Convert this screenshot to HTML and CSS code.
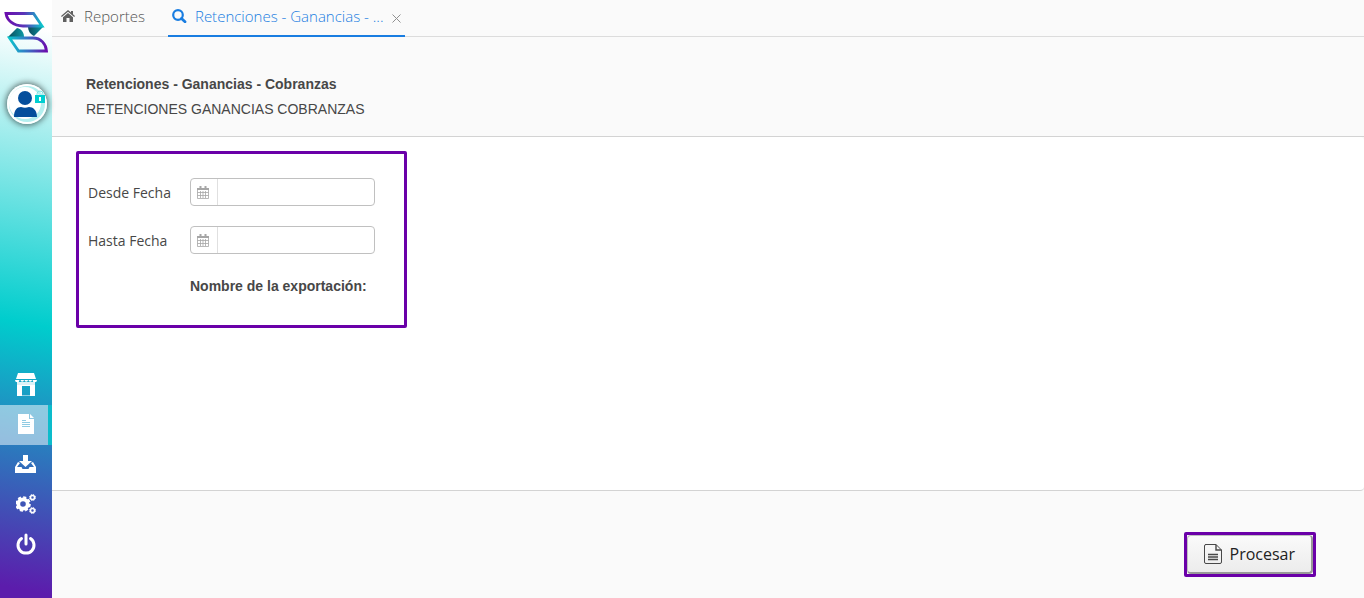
FILE: index.html
```html
<!DOCTYPE html>
<html lang="es">
<head>
    <meta charset="utf-8">
    <title>Retenciones - Ganancias - Cobranzas</title>
    <link rel="stylesheet" href="styles.css">
</head>
<body>
    <aside class="sidebar">
        <a href="#" class="logo" aria-label="Inicio">
            <svg width="44" height="42" viewBox="0 0 44 42">
                <defs>
                    <linearGradient id="brand-top" x1="0" y1="0" x2="1" y2="0">
                        <stop offset="0" stop-color="#6a0dad"/>
                        <stop offset=".5" stop-color="#5a35b8"/>
                        <stop offset="1" stop-color="#0cc4cc"/>
                    </linearGradient>
                    <linearGradient id="brand-bottom" x1="0" y1="0" x2="1" y2="0">
                        <stop offset="0" stop-color="#0cc4cc"/>
                        <stop offset=".5" stop-color="#3a6fc4"/>
                        <stop offset="1" stop-color="#6a0dad"/>
                    </linearGradient>
                    <linearGradient id="brand-fold" x1="0" y1="0" x2="1" y2="0">
                        <stop offset="0" stop-color="#0b4a5c"/>
                        <stop offset="1" stop-color="#0c9aa4"/>
                    </linearGradient>
                </defs>
                <path d="M24 15h16L30 25c-4-2-6-5-6-10z" fill="url(#brand-fold)"/>
                <path d="M4 26h16c0-4-2-8-7-9z" fill="url(#brand-fold)"/>
                <path d="M2 2.500h27.500L38 15H19C9 15 3 9 2 2.500z" fill="none" stroke="url(#brand-top)" stroke-width="2.800"/>
                <path d="M5.500 27H29c8 0 13 6 13.500 13H14.500z" fill="none" stroke="url(#brand-bottom)" stroke-width="2.800"/>
            </svg>
        </a>
        <button type="button" class="avatar" aria-label="Usuario">
            <svg width="40" height="40" viewBox="0 0 40 40">
                <circle cx="20" cy="20" r="20" fill="#fff"/>
                <circle cx="20" cy="20" r="18" fill="#b4efef"/>
                <circle cx="18" cy="19" r="16" fill="#fff"/>
                <circle cx="18" cy="14" r="7" fill="#044e9c"/>
                <path d="M7 33c0-7 3-10 7-10 3 1 5 1 8 0 4 0 8 3 8 10z" fill="#044e9c"/>
                <path d="M30 12V10a3 3 0 0 1 6 0v2" fill="none" stroke="#7fe3e3" stroke-width="1"/>
                <path d="M28 11h10v8H28z" fill="#00ced1"/>
                <path d="M32 13h2v4h-2z" fill="#fff"/>
            </svg>
        </button>
        <nav class="menu">
            <a href="#" class="menu-item" aria-label="Ventas">
                <svg width="22" height="23" viewBox="0 0 22 23" fill="#fff">
                    <path d="M3 0h16l2 6H1z"/>
                    <path d="M2 9h18v3H2z" fill-opacity=".85"/>
                    <path d="M0 7h4.500a2.200 2.200 0 0 1-4.500 0zM5.500 7H9a1.700 1.700 0 0 1-3.500 0zM9.500 7h3.500a1.700 1.700 0 0 1-3.500 0zM13.500 7H17a1.700 1.700 0 0 1-3.500 0zM17.500 7H22a2.200 2.200 0 0 1-4.500 0z"/>
                    <path d="M2 12h18v11h-5V13H7v10H2z"/>
                    <path d="M7 22h8v1H7z" fill-opacity=".5"/>
                </svg>
            </a>
            <a href="#" class="menu-item active" aria-label="Reportes">
                <svg width="16" height="20" viewBox="0 0 16 20">
                    <path d="M0 0h11v5h5v15H0z" fill="#fff"/>
                    <path d="M12 0l4 4h-4z" fill="#fff"/>
                    <path d="M4 6.500h4M4 8.500h8M4 10.500h8M4 12.500h8" stroke="#90cbe2" stroke-width="1"/>
                </svg>
            </a>
            <a href="#" class="menu-item" aria-label="Importar">
                <svg width="22" height="18" viewBox="0 0 22 18" fill="#fff">
                    <path d="M8 0h5v6h4l-6.500 6L4 6h4z"/>
                    <path d="M3 7l2 1-3 4h4.500l1 2h6l1-2H19l-3-4 2-1 3 5v6H0v-6z"/>
                </svg>
            </a>
            <a href="#" class="menu-item" aria-label="Configuración">
                <svg width="20" height="20" viewBox="0 0 20 20" fill="none" stroke="#fff">
                    <circle cx="7" cy="10" r="4.700" stroke-width="3.800"/>
                    <circle cx="7" cy="10" r="6.600" stroke-width="2.400" stroke-dasharray="3 2.180"/>
                    <circle cx="16.500" cy="3.500" r="2" stroke-width="1.500"/>
                    <circle cx="16.500" cy="3.500" r="3" stroke-width="1" stroke-dasharray="1.400 .95"/>
                    <circle cx="16.500" cy="16.500" r="2" stroke-width="1.500"/>
                    <circle cx="16.500" cy="16.500" r="3" stroke-width="1" stroke-dasharray="1.400 .95"/>
                </svg>
            </a>
            <a href="#" class="menu-item" aria-label="Salir">
                <svg width="20" height="22" viewBox="0 0 20 22" fill="none" stroke="#fff" stroke-width="3" stroke-linecap="round">
                    <path d="M5.500 5.500a8 8 0 1 0 9 0M10 2v9"/>
                </svg>
            </a>
        </nav>
    </aside>

    <main class="main">
        <nav class="tabs">
            <a href="#" class="tab">
                <svg class="tab-icon" width="15" height="12" viewBox="0 0 15 12" fill="#606060">
                    <path d="M7 0l3 2.600V1h2v3.300L14 6l-.8.900L7 1.700.8 6.900 0 6z"/>
                    <path d="M7 3l5 4.200V12H8.500V8h-3v4H2V7.200z"/>
                </svg>
                Reportes
            </a>
            <div class="tab active">
                <svg class="tab-icon" width="15" height="14" viewBox="0 0 15 14" fill="none" stroke="#197de1">
                    <circle cx="6" cy="6" r="4.800" stroke-width="2.200"/>
                    <path d="M9.500 9.500l3.500 3.300" stroke-width="2.800" stroke-linecap="round"/>
                </svg>
                <a href="#">Retenciones - Ganancias - ...</a>
                <button type="button" class="tab-close" aria-label="Cerrar">
                    <svg width="9" height="9" viewBox="0 0 9 9" stroke="#909090"><path d="M.5.5l8 8M8.500.5l-8 8"/></svg>
                </button>
            </div>
        </nav>

        <header class="heading">
            <h1>Retenciones - Ganancias - Cobranzas</h1>
            <p>RETENCIONES GANANCIAS COBRANZAS</p>
        </header>

        <section class="content">
            <form class="filters" id="filters">
                <label for="desde">Desde Fecha</label>
                <div class="datefield">
                    <button type="button" aria-label="Elegir fecha desde">
                        <svg width="12" height="13" viewBox="0 0 12 13" fill="none" stroke="#a6a6a6">
                            <path d="M.5 3.500h11v9H.5zM.5 6.500h11M.5 9.500h11M3.500 5v7M6 5v7M8.500 5v7" stroke-opacity=".8"/>
                            <path d="M0 3h12" stroke-width="2"/>
                            <path d="M3.500 0v3M8.500 0v3" stroke-width="2"/>
                        </svg>
                    </button>
                    <input type="text" id="desde">
                </div>
                <label for="hasta">Hasta Fecha</label>
                <div class="datefield">
                    <button type="button" aria-label="Elegir fecha hasta">
                        <svg width="12" height="13" viewBox="0 0 12 13" fill="none" stroke="#a6a6a6">
                            <path d="M.5 3.500h11v9H.5zM.5 6.500h11M.5 9.500h11M3.500 5v7M6 5v7M8.500 5v7" stroke-opacity=".8"/>
                            <path d="M0 3h12" stroke-width="2"/>
                            <path d="M3.500 0v3M8.500 0v3" stroke-width="2"/>
                        </svg>
                    </button>
                    <input type="text" id="hasta">
                </div>
                <p class="export-name">Nombre de la exportación:</p>
            </form>
        </section>

        <footer class="actions">
            <div class="highlight">
                <button type="submit" form="filters" class="process">
                    <svg width="18" height="20" viewBox="0 0 18 20" fill="none" stroke="#484848">
                        <path d="M1.500.5h10.500l5.500 5.500v12a1.500 1.500 0 0 1-1.500 1.500H2A1.500 1.500 0 0 1 .5 18V2A1.500 1.500 0 0 1 2 .5z"/>
                        <path d="M12 .5V6h5.500M4 10.500h10M4 13h10M4 15.500h10" stroke-width="1.400"/>
                    </svg>
                    Procesar
                </button>
            </div>
        </footer>
    </main>
</body>
</html>
```
FILE: styles.css
```css
* {
    box-sizing: border-box;
}
body {
    margin: 0;
    display: flex;
    min-height: 100vh;
    background: #fafafa;
    color: #474747;
    font-family: "Open Sans", sans-serif;
    font-size: 14px;
}
h1, p {
    margin: 0;
}
a {
    color: inherit;
    text-decoration: none;
}
button {
    font-family: inherit;
    cursor: pointer;
}
svg {
    display: block;
    flex: none;
}

/* sidebar */
.sidebar {
    width: 52px;
    flex: none;
    display: flex;
    flex-direction: column;
    align-items: center;
    padding: 11px 0 33px;
    background: linear-gradient(190deg, #fff 5%, #00cdcd 54%, #5c1cac 98%);
}
.avatar {
    width: 40px;
    height: 40px;
    margin-top: 31px;
    margin-left: 2px;
    padding: 0;
    border: 0;
    border-radius: 50%;
    background: none;
    box-shadow: 0 0 6px 1px rgba(0, 0, 0, .6);
}
.menu {
    width: 100%;
    margin-top: auto;
}
.menu-item {
    display: flex;
    align-items: center;
    justify-content: center;
    height: 40px;
    padding-bottom: 2px;
}
.menu-item.active {
    background: rgba(255, 255, 255, .5);
    border-right: 4px solid #0cbccb;
    background-clip: padding-box;
    padding-left: 4px;
}

/* tabs */
.main {
    flex: 1;
    min-width: 0;
    display: flex;
    flex-direction: column;
}
.tabs {
    display: flex;
    gap: 23px;
    height: 37px;
    padding-left: 9px;
    border-bottom: 1px solid #dcdcdc;
    font-size: 15px;
    font-weight: 300;
    line-height: 32px;
    color: #555;
}
.tab {
    display: flex;
    align-items: center;
    gap: 8px;
    height: 32px;
}
.tab.active {
    height: 37px;
    padding: 0 4px 3px;
    border-bottom: 2px solid #197de1;
    color: #197de1;
}
.tab-close {
    padding: 4px 0 0;
    border: 0;
    background: none;
}

.heading {
    padding: 35px 34px 14px;
    border-bottom: 1px solid #d3d3d3;
    font-family: "Liberation Sans", Arial, sans-serif;
    line-height: 25px;
}
.heading h1 {
    font-size: 14px;
}

/* filters */
.content {
    flex: 1;
    padding: 14px 24px;
    background: #fff;
    border-bottom: 1px solid #d3d3d3;
    border-radius: 0 4px 4px 0;
}
.filters {
    display: inline-grid;
    grid-template-columns: 102px 185px;
    row-gap: 20px;
    align-items: center;
    padding: 24px 29px 27px 9px;
    border: 3px solid #6a00a8;
    border-radius: 2px;
}
.datefield {
    display: flex;
    height: 28px;
    border: 1px solid #c0c0c0;
    border-radius: 4px;
    background: #fff;
}
.datefield button {
    width: 27px;
    padding: 0 8px 0 6px;
    border: 0;
    border-right: 1px solid #e0e0e0;
    background: none;
}
.datefield input {
    flex: 1;
    min-width: 0;
    border: 0;
    background: none;
    font: inherit;
}
.export-name {
    grid-column: 2;
    font-family: "Liberation Sans", Arial, sans-serif;
    font-weight: bold;
    line-height: 24px;
}

/* actions */
.actions {
    display: flex;
    justify-content: flex-end;
    padding: 41px 48px 21px;
}
.highlight {
    border: 3px solid #6a00a8;
    border-radius: 2px;
}
.process {
    display: flex;
    align-items: center;
    gap: 8px;
    height: 39px;
    padding: 0 16px;
    border: 1px solid #c0c0c0;
    border-right: 2px solid #999;
    border-bottom: 2px solid #999;
    border-radius: 4px;
    background: linear-gradient(#fafafa, #ececec);
    color: #222;
    font-size: 16px;
}
```
